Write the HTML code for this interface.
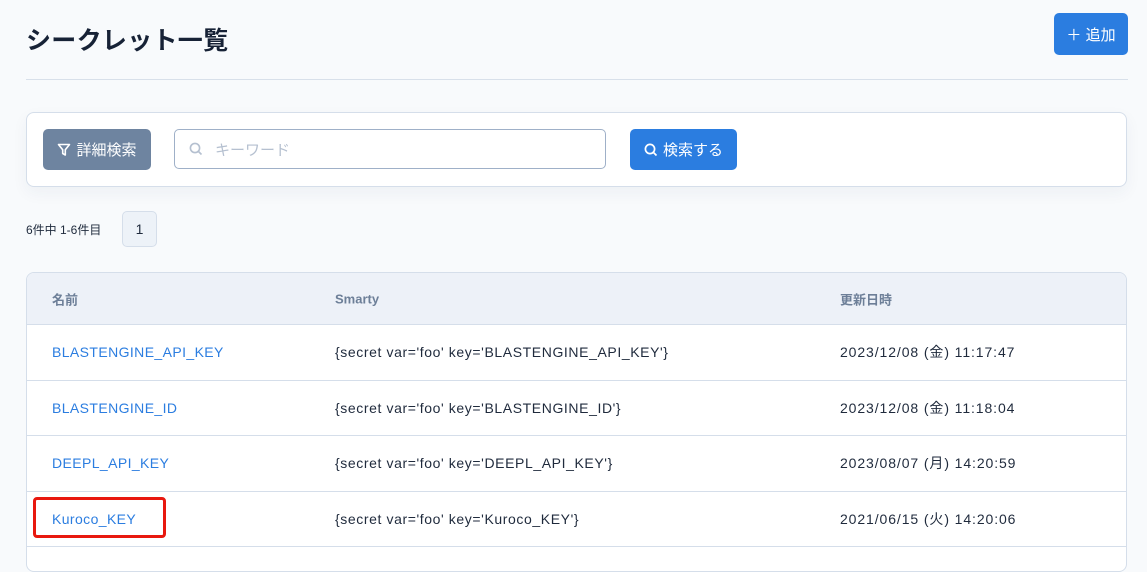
<!DOCTYPE html>
<html><head><meta charset="utf-8"><style>
*{box-sizing:border-box;margin:0;padding:0}
body{width:1147px;height:558px;overflow:hidden;background:#f8fafc;font-family:"Liberation Sans","Noto Sans CJK JP",sans-serif;color:#1f2a3c;position:relative}
.abs{position:absolute}
h1{position:absolute;left:26px;top:21px;font-size:25px;font-weight:bold;color:#172236;letter-spacing:0.3px}
.btn{position:absolute;border-radius:5px;color:#fff;font-size:15px;display:flex;align-items:center;justify-content:center;gap:5px}
.card{position:absolute;left:26px;top:112px;width:1101px;height:75px;background:#fff;border:1px solid #d5deea;border-radius:8px;box-shadow:0 6px 16px rgba(30,50,90,0.05)}
.input{position:absolute;left:174px;top:129px;width:432px;height:40px;border:1px solid #9fb0c8;border-radius:5px;background:#fff;color:#b5c0d0;font-size:15px;display:flex;align-items:center;padding-left:14px;gap:12px}
.table{position:absolute;left:26px;top:272px;width:1101px;height:300px;background:#fff;border:1px solid #d5deea;border-radius:8px;overflow:hidden}
.hd{height:52px;background:#edf1f8;border-bottom:1px solid #d5deea;position:relative;font-size:13px;color:#6d7f98;font-weight:bold}
.row{height:55.5px;border-bottom:1px solid #d5deea;position:relative;font-size:14px;letter-spacing:0.4px}
.c1,.c2,.c3{position:absolute;top:50%;transform:translateY(-50%);white-space:nowrap}
.c1{left:25px;color:#2b7de0}.c2{left:308px}.c3{left:813px}
.row .c2{letter-spacing:0.6px}.row .c3{letter-spacing:0.9px}
.hd .c2,.hd .c3,.hd .c1{color:#6d7f98}
</style></head><body>
<h1>シークレット一覧</h1>
<div class="btn" style="left:1054px;top:13px;width:74px;height:42px;background:#2b7de0">＋ 追加</div>
<div class="abs" style="left:26px;top:79px;width:1102px;height:1px;background:#d8e0ea"></div>
<div class="card"></div>
<div class="btn" style="left:43px;top:129px;width:108px;height:41px;background:#6e84a0">
<svg width="14" height="14" viewBox="0 0 14 14"><path d="M1.5 1.5h11L8.3 6.8v5.2L5.7 10.5V6.8z" fill="none" stroke="#fff" stroke-width="1.6" stroke-linejoin="round"/></svg>詳細検索</div>
<div class="input"><svg width="14" height="14" viewBox="0 0 14 14"><circle cx="6" cy="6" r="4.6" fill="none" stroke="#b5c0d0" stroke-width="1.6"/><path d="M9.5 9.5l3 3" stroke="#b5c0d0" stroke-width="1.6"/></svg>キーワード</div>
<div class="btn" style="left:630px;top:129px;width:107px;height:41px;background:#2b7de0">
<svg width="14" height="14" viewBox="0 0 14 14"><circle cx="6" cy="6" r="4.6" fill="none" stroke="#fff" stroke-width="1.7"/><path d="M9.5 9.5l3 3" stroke="#fff" stroke-width="1.7"/></svg>検索する</div>
<div class="abs" style="left:26px;top:221px;font-size:12px;color:#1f2a3c">6件中 1-6件目</div>
<div class="abs" style="left:122px;top:211px;width:35px;height:36px;background:#edf2f8;border:1px solid #d5deea;border-radius:5px;font-size:14px;display:flex;align-items:center;justify-content:center">1</div>
<div class="table">
<div class="hd"><span class="c1">名前</span><span class="c2">Smarty</span><span class="c3">更新日時</span></div>
<div class="row"><span class="c1">BLASTENGINE_API_KEY</span><span class="c2">{secret var='foo' key='BLASTENGINE_API_KEY'}</span><span class="c3">2023/12/08 (金) 11:17:47</span></div>
<div class="row"><span class="c1">BLASTENGINE_ID</span><span class="c2">{secret var='foo' key='BLASTENGINE_ID'}</span><span class="c3">2023/12/08 (金) 11:18:04</span></div>
<div class="row"><span class="c1">DEEPL_API_KEY</span><span class="c2">{secret var='foo' key='DEEPL_API_KEY'}</span><span class="c3">2023/08/07 (月) 14:20:59</span></div>
<div class="row"><span class="c1">Kuroco_KEY</span><span class="c2">{secret var='foo' key='Kuroco_KEY'}</span><span class="c3">2021/06/15 (火) 14:20:06</span></div>
</div>
<div class="abs" style="left:33px;top:497px;width:133px;height:41px;border:3px solid #e8180f;border-radius:4px"></div>
</body></html>
